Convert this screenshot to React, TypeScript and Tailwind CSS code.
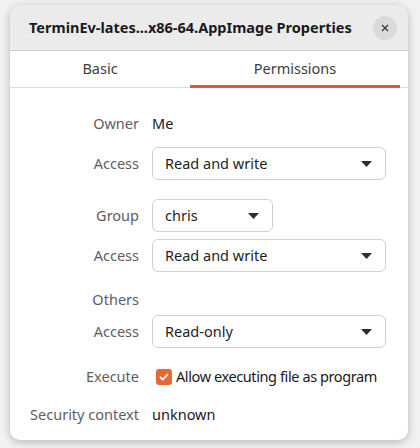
import { ReactNode } from "react"

const font = { fontFamily: '"Noto Sans", "Open Sans", sans-serif' }

function Arrow() {
  return (
    <svg width="11" height="6" viewBox="0 0 11 6" className="shrink-0">
      <path d="M0 0 L11 0 L5.5 6 Z" fill="#2e2e2e" />
    </svg>
  )
}

function Dropdown({ value, className = "" }: { value: string; className?: string }) {
  return (
    <div
      className={`h-[33px] flex items-center justify-between pl-[12px] pr-[13px] rounded-[6px] border border-[#d0d0d0] bg-white text-[#1e1e1e] ${className}`}
    >
      <span>{value}</span>
      <Arrow />
    </div>
  )
}

function Row({ label, children, className = "" }: { label: string; children?: ReactNode; className?: string }) {
  return (
    <div className={`flex items-center ${className}`}>
      <div className="w-[129px] shrink-0 text-right text-[#5e5e5e]">{label}</div>
      <div className="ml-[13px] flex-1 flex items-center">{children}</div>
    </div>
  )
}

export default function App() {
  return (
    <div className="w-[420px] h-[448px] bg-[#f2f2f2] pt-[5px] pl-[10px] text-[14.5px]" style={font}>
      <div className="w-[398px] h-[435px] bg-white rounded-t-[12px] rounded-b-[10px] shadow-[0_2px_8px_rgba(0,0,0,0.25)] overflow-hidden flex flex-col">
        {/* Header */}
        <div className="h-[46px] bg-[#ebebeb] border-b border-[#d0d0d0] flex items-center justify-between pl-[19px] pr-[11px] shrink-0">
          <span className="font-bold text-[14.5px] text-[#1a1a1a]">TerminEv-lates...x86-64.AppImage Properties</span>
          <button className="w-[24px] h-[24px] rounded-full bg-[#dadada] flex items-center justify-center">
            <svg width="8" height="8" viewBox="0 0 8 8">
              <path d="M1 1 L7 7 M7 1 L1 7" stroke="#3a3a3a" strokeWidth="1.3" />
            </svg>
          </button>
        </div>

        {/* Tabs */}
        <div className="h-[37px] flex border-b border-[#dcdcdc] pr-[8px] shrink-0 text-[#3d3d3d]">
          <div className="w-[180px] flex items-center justify-center">Basic</div>
          <div className="flex-1 flex items-center justify-center relative">
            Permissions
            <div className="absolute left-0 right-0 bottom-[-1px] h-[3px] bg-[#dd5b2c]" />
          </div>
        </div>

        {/* Content */}
        <div className="flex flex-col pt-[24px] pr-[22px]">
          <Row label="Owner" className="h-[24px]">
            <span className="text-[#1a1a1a]">Me</span>
          </Row>
          <Row label="Access" className="mt-[11px]">
            <Dropdown value="Read and write" className="w-full" />
          </Row>
          <Row label="Group" className="mt-[19px]">
            <Dropdown value="chris" className="w-[121px]" />
          </Row>
          <Row label="Access" className="mt-[7px]">
            <Dropdown value="Read and write" className="w-full" />
          </Row>
          <Row label="Others" className="mt-[16px] h-[24px]" />
          <Row label="Access" className="mt-[3px]">
            <Dropdown value="Read-only" className="w-full" />
          </Row>
          <Row label="Execute" className="mt-[17px] h-[24px]">
            <div className="ml-[4px] w-[16px] h-[16px] rounded-[3px] bg-[#e66a38] flex items-center justify-center shrink-0">
              <svg width="10" height="8" viewBox="0 0 10 8">
                <path d="M1 4 L3.8 6.6 L9 1.2" stroke="white" strokeWidth="1.8" fill="none" />
              </svg>
            </div>
            <span className="ml-[4px] text-[#1a1a1a] whitespace-nowrap tracking-[-0.4px]">Allow executing file as program</span>
          </Row>
          <Row label="Security context" className="mt-[14px] h-[24px]">
            <span className="text-[#1a1a1a]">unknown</span>
          </Row>
        </div>
      </div>
    </div>
  )
}
